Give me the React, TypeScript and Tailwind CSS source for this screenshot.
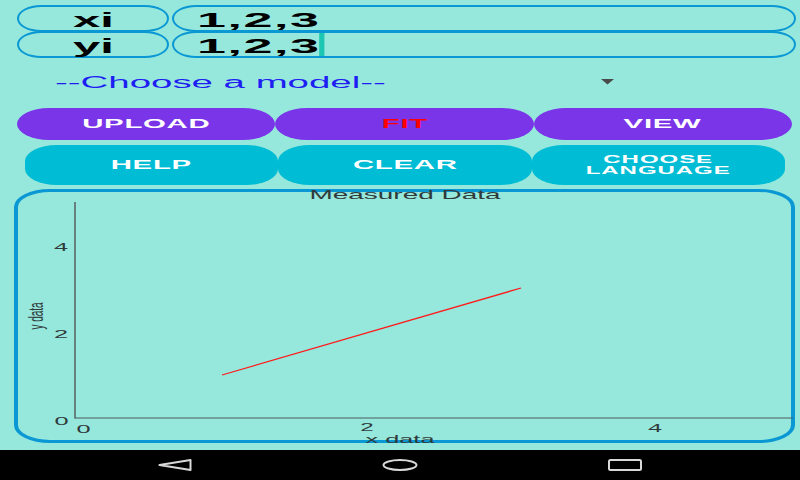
import React from "react";

const BORDER = "border-[#0a98d4]";

function FieldRow({ label, value, cursor, className }: { label: string; value: string; cursor?: boolean; className?: string }) {
  return (
    <div className={`flex h-[27px] gap-[3px] ${className ?? ""}`}>
      <div className={`w-[152px] border-2 ${BORDER} rounded-[24px/50%] flex items-center justify-center pt-[2px]`}>
        <span className="inline-block text-[20px] font-bold scale-x-[2.45] leading-none text-black">{label}</span>
      </div>
      <div className={`flex-1 border-2 ${BORDER} rounded-[24px/50%] flex items-center pl-[23px] pt-[2px]`}>
        <span className="inline-flex items-center origin-left text-[20px] font-bold tracking-[0.6px] scale-x-[2.6] leading-none text-black">
          {value}
          {cursor && <span className="inline-block w-[1.2px] h-[23px] bg-[#1cc6b2] -mt-[2px]" />}
        </span>
      </div>
    </div>
  );
}

function Btn({ children, bg, className }: { children: React.ReactNode; bg: string; className?: string }) {
  return (
    <div className={`flex-1 flex items-center justify-center ${bg} ${className ?? ""}`}>
      {children}
    </div>
  );
}

function BtnText({ children, red }: { children: React.ReactNode; red?: boolean }) {
  return (
    <span className={`inline-block text-[12.5px] font-bold tracking-[0.3px] scale-x-[2.35] leading-none ${red ? "text-[#ff0000]" : "text-white"}`}>
      {children}
    </span>
  );
}

function T({ x, y, s = 11, children, sx = 2.3 }: { x: number; y: number; s?: number; children: React.ReactNode; sx?: number }) {
  return (
    <text
      transform={`translate(${x} ${y}) scale(${sx} 1)`}
      fontSize={s}
      textAnchor="middle"
      fill="#2f3a3a"
      fontFamily="'Liberation Sans', Arial, sans-serif"
    >
      {children}
    </text>
  );
}

export default function App() {
  return (
    <div className="w-[800px] h-[480px] bg-[#96e7dc] flex flex-col overflow-hidden font-['Liberation_Sans',Arial,sans-serif]">
      <div className="pt-[5px] pl-[17px] pr-[4px] flex flex-col">
        <FieldRow label="xi" value="1,2,3" />
        <FieldRow label="yi" value="1,2,3" cursor className="-mt-[1px]" />
      </div>

      <div className="h-[50px] flex items-center pl-[55px]">
        <span className="inline-block origin-left text-[16px] scale-x-[2.4] leading-none text-[#1e1ef2]">
          --Choose a model--
        </span>
        <svg className="ml-auto mr-[186px] -mt-[3px]" width="13" height="6" viewBox="0 0 13 6">
          <path d="M0 0 L13 0 L6.5 5.5 Z" fill="#4a4a4a" />
        </svg>
      </div>

      <div className="h-[32px] flex pl-[17px] pr-[8px]">
        <Btn bg="bg-[#7a35e9]" className="rounded-[32px/50%]"><BtnText>UPLOAD</BtnText></Btn>
        <Btn bg="bg-[#7a35e9]" className="rounded-[32px/50%]"><BtnText red>FIT</BtnText></Btn>
        <Btn bg="bg-[#7a35e9]" className="rounded-[32px/50%]"><BtnText>VIEW</BtnText></Btn>
      </div>

      <div className="mt-[5px] h-[40px] flex pl-[25px] pr-[15px]">
        <Btn bg="bg-[#00bcd4]" className="rounded-[32px/16px]"><BtnText>HELP</BtnText></Btn>
        <Btn bg="bg-[#00bcd4]" className="rounded-[32px/16px]"><BtnText>CLEAR</BtnText></Btn>
        <Btn bg="bg-[#00bcd4]" className="rounded-[32px/16px]">
          <span className="inline-block text-center text-[10px] font-bold tracking-[0.4px] scale-x-[2.4] leading-[11px] text-white">
            CHOOSE
            <br />
            LANGUAGE
          </span>
        </Btn>
      </div>

      <div className={`mt-[4px] ml-[14px] mr-[5px] h-[254px] relative border-x-4 border-y-[3px] ${BORDER} rounded-[36px/18px]`}>
        <svg className="absolute -left-[4px] -top-[3px] overflow-visible" width="781" height="254" viewBox="0 0 781 254">
          <g transform="translate(-14 -189)">
            <T x={405} y={199} s={13} sx={2.15}>Measured Data</T>
            <line x1="75" y1="202" x2="75" y2="418.5" stroke="#5a6a6a" strokeWidth="1.6" />
            <line x1="75" y1="418" x2="793" y2="418" stroke="#4d5c5c" strokeWidth="1" />
            <line x1="222" y1="375" x2="521" y2="288" stroke="#ff1a1a" strokeWidth="1.3" />
            <T x={61} y={251}>4</T>
            <T x={61} y={338}>2</T>
            <T x={61.5} y={425}>0</T>
            <T x={83.5} y={433}>0</T>
            <T x={367} y={431} s={10.5}>2</T>
            <T x={655} y={432}>4</T>
            <T x={400} y={442.5} s={11.5} sx={2.2}>x data</T>
            <text
              transform="translate(43 316) scale(2.1 1) rotate(-90)"
              fontSize={10}
              textAnchor="middle"
              fill="#2f3a3a"
              fontFamily="'Liberation Sans', Arial, sans-serif"
            >
              y data
            </text>
          </g>
        </svg>
      </div>

      <div className="mt-auto h-[30px] bg-black flex items-center justify-between px-[158px]">
        <svg width="34" height="12" viewBox="0 0 34 12">
          <path d="M32.5 1 L1.5 6 L32.5 11 Z" fill="none" stroke="#d9d9d9" strokeWidth="2" strokeLinejoin="round" />
        </svg>
        <svg width="36" height="12" viewBox="0 0 36 12">
          <ellipse cx="18" cy="6" rx="16.5" ry="5" fill="none" stroke="#d9d9d9" strokeWidth="2" />
        </svg>
        <svg width="34" height="12" viewBox="0 0 34 12">
          <rect x="1" y="1" width="32" height="10" rx="1.5" fill="none" stroke="#d9d9d9" strokeWidth="2" />
        </svg>
      </div>
    </div>
  );
}
